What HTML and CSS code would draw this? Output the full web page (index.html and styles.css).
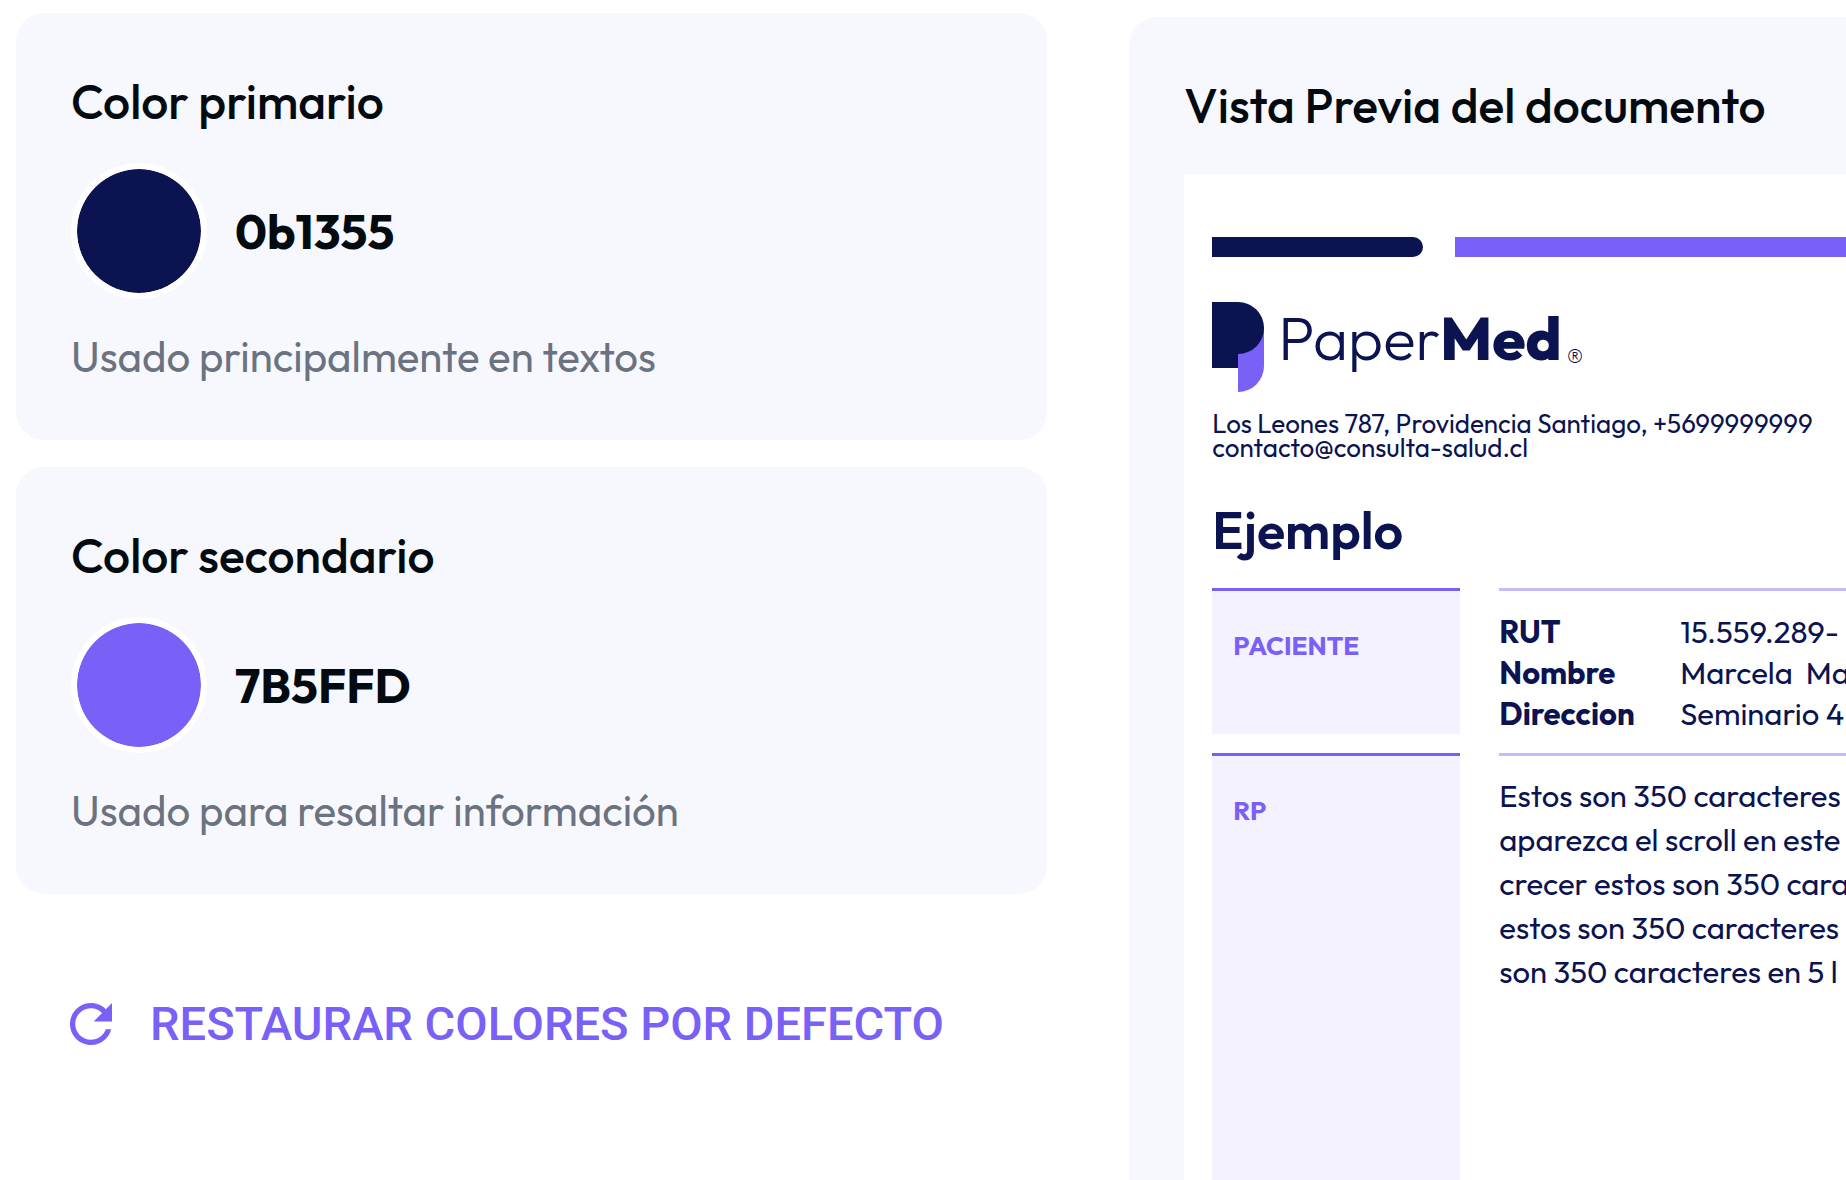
FILE: index.html
```html
<!DOCTYPE html>
<html lang="es">
<head>
  <meta charset="UTF-8">
  <meta name="viewport" content="width=device-width, initial-scale=1.0">
  <title>PaperMed</title>
  <link rel="stylesheet" href="styles.css">
</head>
<body>
  <div class="page">
    <!-- Colores -->
    <main class="settings">
      <section class="card">
        <label class="title" for="color-primary">Color primario</label>
        <div class="picker">
          <input type="color" id="color-primary" class="swatch" value="#0b1350">
          <span class="code">0b1355</span>
        </div>
        <p class="hint">Usado principalmente en textos</p>
      </section>

      <section class="card">
        <label class="title" for="color-secondary">Color secondario</label>
        <div class="picker">
          <input type="color" id="color-secondary" class="swatch" value="#7960f7">
          <span class="code">7B5FFD</span>
        </div>
        <p class="hint">Usado para resaltar información</p>
      </section>

      <button type="button" class="reset-btn">
        <svg class="reset-icon" viewBox="4 4 16 16" aria-hidden="true">
          <path d="M17.65 6.35C16.2 4.9 14.21 4 12 4c-4.42 0-7.99 3.58-7.99 8s3.57 8 7.99 8c3.73 0 6.84-2.55 7.73-6h-2.08c-.82 2.33-3.04 4-5.65 4-3.31 0-6-2.69-6-6s2.69-6 6-6c1.66 0 3.14.69 4.22 1.78L13 11h7V4z"/>
        </svg>
        Restaurar colores por defecto
      </button>
    </main>

    <!-- Vista previa -->
    <aside class="preview">
      <h2 class="title">Vista Previa del documento</h2>
      <article class="document">
        <div class="bars">
          <span class="bar bar-primary"></span>
          <span class="bar bar-secondary"></span>
        </div>

        <div class="logo">
          <svg class="logo-mark" viewBox="0 0 52 90" aria-hidden="true">
            <path class="fill-secondary" d="M26 50 L52 24 V64 A26 26 0 0 1 26 90 Z"/>
            <path class="fill-primary" d="M0 0 H26 A26 26 0 0 1 26 52 V66 H0 Z"/>
          </svg>
          <span class="logo-text">Paper<b>Med</b></span>
          <span class="logo-reg">®</span>
        </div>

        <p class="address">Los Leones 787, Providencia Santiago, +5699999999<br>contacto@consulta-salud.cl</p>

        <h1 class="doc-title">Ejemplo</h1>

        <div class="row">
          <h3 class="row-label">PACIENTE</h3>
          <dl class="row-body patient">
            <dt>RUT</dt>
            <dd>15.559.289-</dd>
            <dt>Nombre</dt>
            <dd>Marcela&nbsp; Ma</dd>
            <dt>Direccion</dt>
            <dd>Seminario 4</dd>
          </dl>
        </div>

        <div class="row row-grow">
          <h3 class="row-label">RP</h3>
          <p class="row-body recipe">Estos son 350 caracteres<br>aparezca el scroll en este<br>crecer estos son 350 cara<br>estos son 350 caracteres<br>son 350 caracteres en 5 l</p>
        </div>
      </article>
    </aside>
  </div>
</body>
</html>
```
FILE: styles.css
```css
* {
  margin: 0;
  padding: 0;
  box-sizing: border-box;
}

:root {
  --primary: #0b1350;
  --secondary: #7960f7;
  --surface: #f7f8fe;
}

body {
  font-family: 'Outfit', 'Lato', sans-serif;
  background-color: #ffffff;
  color: #030b11;
}

.page {
  display: grid;
  grid-template-columns: minmax(0, 59fr) minmax(0, 41fr);
  gap: 82px;
  height: 100vh;
  padding: 13px 0 0 16px;
  overflow: hidden;
}

.title {
  display: block;
  font-size: 48px;
  font-weight: 500;
  line-height: 60px;
  white-space: nowrap;
}

/* Color cards */
.settings {
  display: flex;
  flex-direction: column;
  align-items: stretch;
  gap: 27px;
}

.card {
  background-color: var(--surface);
  border-radius: 28px;
  padding: 58px 55px;
}

.picker {
  display: flex;
  align-items: center;
  gap: 28px;
  margin: 32px 0 33px;
}

.swatch {
  appearance: none;
  width: 136px;
  height: 136px;
  border: 6px solid #ffffff;
  border-radius: 50%;
  background: none;
  cursor: pointer;
  overflow: hidden;
}

.swatch::-webkit-color-swatch-wrapper {
  padding: 0;
}

.swatch::-webkit-color-swatch {
  border: none;
  border-radius: 50%;
}

.code {
  font-size: 48px;
  font-weight: 700;
  line-height: 60px;
}

.hint {
  font-size: 42px;
  line-height: 50px;
  color: #6b7280;
}

.reset-btn {
  display: flex;
  align-items: center;
  align-self: flex-start;
  gap: 38px;
  margin: 73px 0 0 54px;
  border: none;
  background: none;
  color: var(--secondary);
  font-family: 'Roboto', sans-serif;
  font-size: 47px;
  font-weight: 500;
  line-height: 60px;
  text-transform: uppercase;
  white-space: nowrap;
  cursor: pointer;
}

.reset-icon {
  width: 42px;
  height: 42px;
  fill: currentColor;
}

/* Document preview */
.preview {
  display: flex;
  flex-direction: column;
  margin-top: 4px;
  padding: 58px 0 0 55px;
  background-color: var(--surface);
  border-radius: 28px 0 0 0;
}

.document {
  display: flex;
  flex: 1;
  flex-direction: column;
  margin-top: 39px;
  padding: 63px 0 0 28px;
  background-color: #ffffff;
  color: var(--primary);
  white-space: nowrap;
  overflow: hidden;
}

.bars {
  display: flex;
  gap: 32px;
}

.bar {
  height: 20px;
}

.bar-primary {
  width: 211px;
  background-color: var(--primary);
  border-radius: 0 10px 10px 0;
}

.bar-secondary {
  flex: 1;
  background-color: var(--secondary);
}

.logo {
  display: flex;
  align-items: flex-start;
  margin-top: 45px;
}

.logo-mark {
  width: 52px;
  height: 90px;
  margin-right: 14px;
}

.fill-primary {
  fill: var(--primary);
}

.fill-secondary {
  fill: var(--secondary);
}

.logo-text {
  font-size: 60px;
  font-weight: 300;
  line-height: 72px;
}

.logo-text b {
  font-weight: 800;
}

.logo-reg {
  margin: 42px 0 0 4px;
  font-size: 32px;
  font-weight: 300;
  line-height: 30px;
}

.address {
  margin-top: 20px;
  font-size: 26px;
  line-height: 24px;
}

.doc-title {
  margin: 40px 0 9px;
  font-size: 52px;
  font-weight: 600;
  line-height: 60px;
}

.row {
  display: grid;
  grid-template-columns: 248px minmax(0, 1fr);
  gap: 39px;
  margin-top: 19px;
}

.row-grow {
  flex: 1;
}

.row-label {
  padding: 40px 21px;
  border-top: 3px solid var(--secondary);
  background-color: #f3f2fe;
  color: var(--secondary);
  font-size: 26px;
  font-weight: 700;
  line-height: 30px;
}

.row-body {
  border-top: 3px solid #c5bbf9;
  font-size: 31px;
}

.patient {
  display: grid;
  grid-template-columns: 181px minmax(0, 1fr);
  padding-top: 20px;
  line-height: 41px;
}

.patient dt {
  font-weight: 700;
}

.recipe {
  padding-top: 18px;
  line-height: 44px;
}
```
